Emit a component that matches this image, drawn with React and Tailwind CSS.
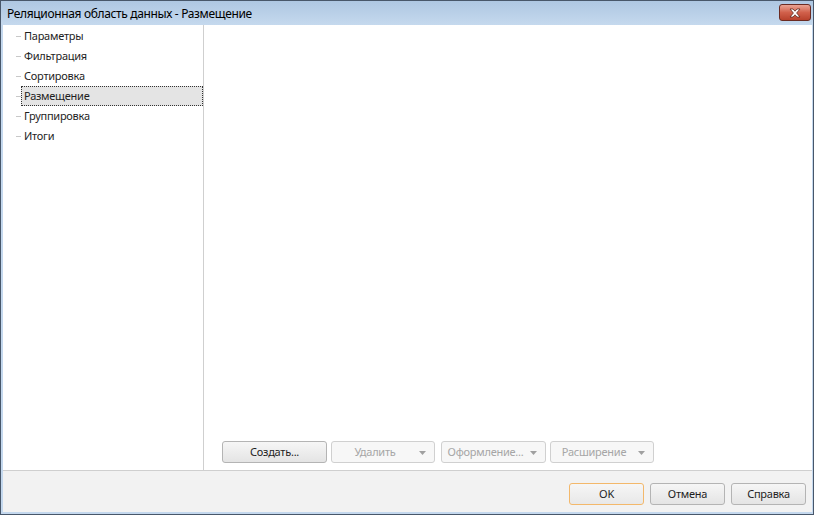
import React from "react";

const font = { fontFamily: '"Noto Sans", "Open Sans", sans-serif' };

function Arrow({ disabled }) {
  return (
    <svg width="7" height="4" viewBox="0 0 7 4" className="absolute right-[8px] top-[9px]">
      <path d="M0 0 L7 0 L3.5 4 Z" fill={disabled ? "#a0a0a0" : "#555"} />
    </svg>
  );
}

function TreeItem({ label, selected }) {
  return (
    <div className="flex items-center h-[20px]">
      <div className="w-[5px] h-px bg-[#c8c8c8] ml-[13px]" />
      <div
        className={
          "flex items-center h-[20px] flex-1 pl-[2px] " +
          (selected ? "bg-[#e4e4e4] border border-dotted border-[#333]" : "border border-transparent")
        }
      >
        <span className="text-[11px] tracking-[-0.25px] text-[#1e1e1e]">{label}</span>
      </div>
    </div>
  );
}

function Btn({ children, w, disabled, drop, primary, className = "" }) {
  return (
    <div
      className={
        "relative flex items-center justify-center h-[22px] rounded-[3px] border text-[11px] tracking-[-0.25px] " +
        (primary
          ? "border-[#f3b86b] bg-gradient-to-b from-[#f6f6f6] to-[#e8e8e8] text-[#1e1e1e] "
          : disabled
          ? "border-[#d0d0d0] bg-[#f7f7f7] text-[#a6a6a6] "
          : "border-[#b4b4b4] bg-gradient-to-b from-[#f6f6f6] to-[#e4e4e4] text-[#1e1e1e] ") +
        className
      }
      style={{ width: w }}
    >
      <span className={drop ? "pr-[16px]" : ""}>{children}</span>
      {drop && <Arrow disabled={disabled} />}
    </div>
  );
}

export default function App() {
  return (
    <div className="w-[814px] h-[515px] flex flex-col border border-[#48576a] bg-[#c4d8ee] select-none" style={font}>
      <div className="h-[24px] flex items-center justify-between bg-gradient-to-b from-[#aec7e2] to-[#c5d9ee]">
        <span className="text-[12px] tracking-[-0.35px] text-black pl-[6px] pt-[1px]">Реляционная область данных - Размещение</span>
        <div className="mr-[2px] mt-[-1px] w-[32px] h-[17px] rounded-[3px] border border-[#6b2b22] bg-gradient-to-b from-[#e8a393] via-[#d1604b] to-[#b8412c] flex items-center justify-center">
          <svg width="14" height="10" viewBox="0 0 14 10">
            <path d="M2 1 L5 1 L7 3.2 L9 1 L12 1 L8.6 5 L12 9 L9 9 L7 6.8 L5 9 L2 9 L5.4 5 Z" fill="#fff" stroke="#5a2a20" strokeWidth="0.8" />
          </svg>
        </div>
      </div>
      <div className="flex-1 flex flex-col ml-[2px] mr-[1px] mb-[2px] bg-white">
        <div className="flex-1 flex">
          <div className="w-[201px] border-r border-[#cfcfcf] pt-[1px]">
            <TreeItem label="Параметры" />
            <TreeItem label="Фильтрация" />
            <TreeItem label="Сортировка" />
            <TreeItem label="Размещение" selected />
            <TreeItem label="Группировка" />
            <TreeItem label="Итоги" />
          </div>
          <div className="flex-1 flex flex-col justify-end pl-[18px] pb-[7px]">
            <div className="flex">
              <Btn w={105}>Создать...</Btn>
              <Btn w={104} disabled drop className="ml-[4px]">Удалить</Btn>
              <Btn w={105} disabled drop className="ml-[6px]">Оформление...</Btn>
              <Btn w={104} disabled drop className="ml-[4px]">Расширение</Btn>
            </div>
          </div>
        </div>
        <div className="h-[42px] border-t border-[#cfcfcf] bg-[#f2f2f2] flex items-start justify-end gap-[6px] pt-[12px] pr-[6px]">
          <Btn w={75} primary>OK</Btn>
          <Btn w={75}>Отмена</Btn>
          <Btn w={75}>Справка</Btn>
        </div>
      </div>
    </div>
  );
}
